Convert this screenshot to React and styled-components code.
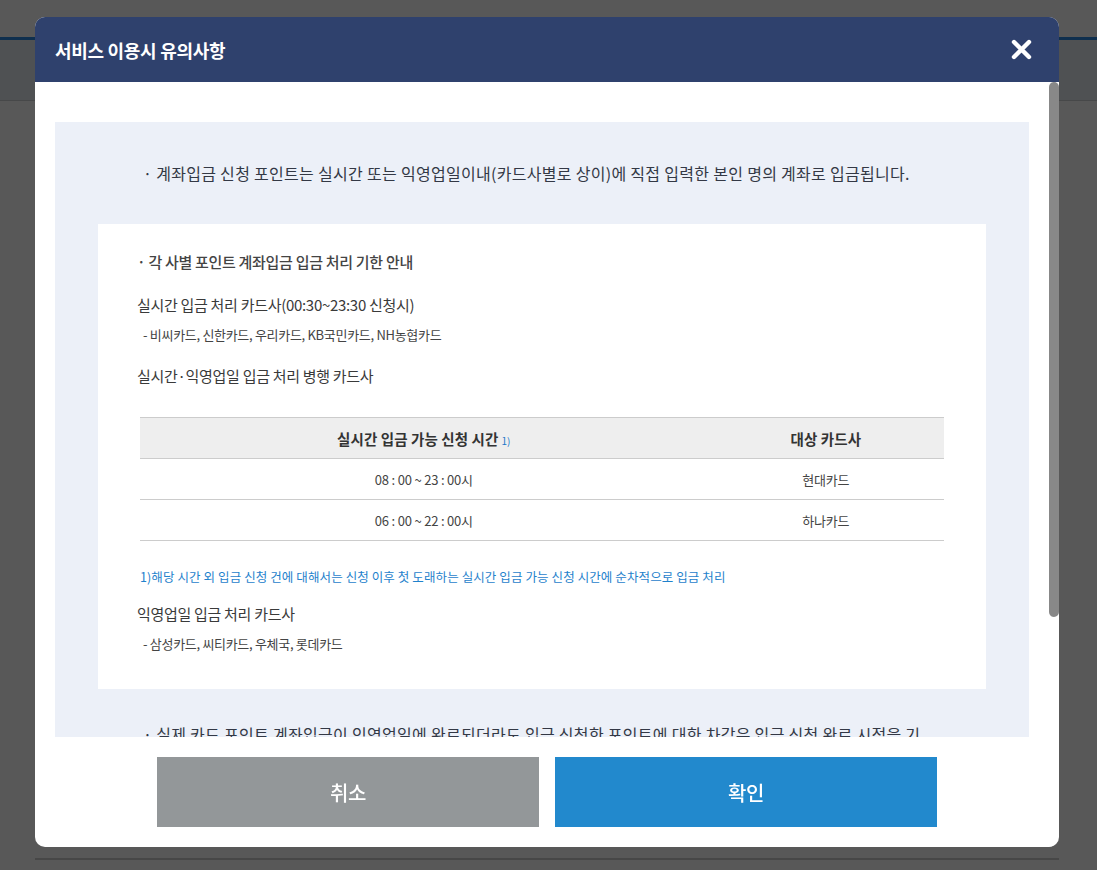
import React from "react";
import styled, { createGlobalStyle } from "styled-components";

const GlobalStyle = createGlobalStyle`
  html, body {
    margin: 0;
    padding: 0;
    background: #585858;
    font-family: "Noto Sans CJK KR", "Noto Sans", sans-serif;
  }
`;

// the page behind the dimmed overlay
export const Page = styled.div`
  height: 870px;
  display: flex;
  flex-direction: column;
  background: #585858;
`;

export const PageTop = styled.div`
  height: 37px;
`;

export const PageNav = styled.div`
  height: 60px;
  background: #4f5153;
  border-top: 3px solid #0f2f4e;
  border-bottom: 1px solid #474849;
`;

export const PageRule = styled.div`
  margin: 757px 38px 0 35px;
  border-top: 2px solid #474747;
`;

export const Modal = styled.div`
  position: fixed;
  left: 35px;
  top: 17px;
  width: 1024px;
  height: 830px;
  display: flex;
  flex-direction: column;
  background: #fff;
  border-radius: 10px;
  overflow: hidden;
`;

export const ModalHeader = styled.div`
  height: 65px;
  flex-shrink: 0;
  display: flex;
  align-items: center;
  justify-content: space-between;
  padding: 0 26px 0 20px;
  background: #2f416d;
`;

export const Title = styled.h2`
  margin: 0;
  font-size: 18px;
  font-weight: 700;
  letter-spacing: -0.3px;
  color: #fff;
`;

export const CloseButton = styled.button`
  width: 24px;
  height: 24px;
  padding: 0;
  border: 0;
  background: none;
  display: flex;
  align-items: center;
  justify-content: center;
  cursor: pointer;
`;

export const ModalBody = styled.div`
  flex: 1;
  min-height: 0;
  display: flex;
`;

export const BodyScroll = styled.div`
  flex: 1;
  overflow-y: auto;
  scrollbar-width: none;
  padding: 40px 20px 55px;

  &::-webkit-scrollbar {
    display: none;
  }
`;

export const ScrollTrack = styled.div`
  width: 10px;
  flex-shrink: 0;
  background: #fff;
`;

export const ScrollThumb = styled.div`
  height: 535px;
  background: #888;
  border-radius: 5px;
`;

export const NoticeBox = styled.div`
  background: #ecf0f8;
  padding: 39px 43px 60px;
`;

export const Notice = styled.p`
  margin: 0;
  padding: 0 58px 0 45px;
  font-size: 16px;
  line-height: 24px;
  letter-spacing: 0.3px;
  color: #333845;
`;

export const Guide = styled.div`
  background: #fff;
  margin: 39px 0 33px;
  padding: 28px 42px 36px 39px;
  display: flex;
  flex-direction: column;
`;

export const GuideTitle = styled.div`
  font-size: 15px;
  line-height: 20px;
  font-weight: 500;
  letter-spacing: -0.3px;
  color: #444;
  margin-bottom: 22px;
`;

export const Label = styled.div`
  font-size: 15px;
  line-height: 22px;
  letter-spacing: -0.3px;
  color: #3a3a3a;
  margin-bottom: ${(p) => p.$gap || 0}px;
`;

export const SubList = styled.div`
  font-size: 13px;
  line-height: 18px;
  letter-spacing: -0.3px;
  color: #444;
  padding-left: 6px;
  margin: 10px 0 ${(p) => p.$gap || 0}px;
`;

export const Table = styled.table`
  width: calc(100% - 3px);
  margin-left: 3px;
  border-collapse: collapse;
  border-top: 1px solid #cccccc;
  margin-bottom: 27px;
`;

export const Th = styled.th`
  height: 40px;
  padding: 0;
  background: #eeeeee;
  border-bottom: 1px solid #cccccc;
  font-size: 14.5px;
  font-weight: 700;
  letter-spacing: 0.1px;
  color: #333;
  text-align: center;
`;

export const Td = styled.td`
  height: 40px;
  padding: 0;
  border-bottom: 1px solid #cccccc;
  font-size: 13px;
  letter-spacing: -0.2px;
  color: #444;
  text-align: center;
`;

export const Ref = styled.span`
  font-size: 10px;
  font-weight: 400;
  color: #1f78c8;
  margin-left: 3px;
`;

export const Footnote = styled.div`
  margin-left: 3px;
  font-size: 12.5px;
  line-height: 18px;
  letter-spacing: 0.1px;
  color: #1f82cc;
  margin-bottom: 17px;
`;

export const Footer = styled.div`
  height: 110px;
  flex-shrink: 0;
  box-sizing: border-box;
  padding: 20px 0;
  display: flex;
  justify-content: center;
  gap: 16px;
`;

export const Button = styled.button`
  width: 382px;
  height: 70px;
  border: 0;
  background: ${(p) => (p.$primary ? "#2289cd" : "#939799")};
  color: #fff;
  font-family: inherit;
  font-size: 20px;
  font-weight: 500;
  letter-spacing: -0.5px;
  cursor: pointer;
`;

const rows = [
  ["08 : 00 ~ 23 : 00시", "현대카드"],
  ["06 : 00 ~ 22 : 00시", "하나카드"],
];

export default function App() {
  return (
    <>
      <GlobalStyle />
      <Page>
        <PageTop />
        <PageNav />
        <PageRule />
      </Page>
      <Modal>
        <ModalHeader>
          <Title>서비스 이용시 유의사항</Title>
          <CloseButton aria-label="닫기">
            <svg width="21" height="21" viewBox="0 0 21 21">
              <path d="M3 3 L18 18 M18 3 L3 18" stroke="#fff" strokeWidth="4.4" strokeLinecap="round" />
            </svg>
          </CloseButton>
        </ModalHeader>
        <ModalBody>
          <BodyScroll>
            <NoticeBox>
              <Notice>
                · 계좌입금 신청 포인트는 실시간 또는 익영업일이내(카드사별로 상이)에 직접 입력한 본인 명의 계좌로 입금됩니다.
              </Notice>
              <Guide>
                <GuideTitle>· 각 사별 포인트 계좌입금 입금 처리 기한 안내</GuideTitle>
                <Label>실시간 입금 처리 카드사(00:30~23:30 신청시)</Label>
                <SubList $gap={21}>- 비씨카드, 신한카드, 우리카드, KB국민카드, NH농협카드</SubList>
                <Label $gap={30}>실시간·익영업일 입금 처리 병행 카드사</Label>
                <Table>
                  <colgroup>
                    <col style={{ width: "70.6%" }} />
                    <col />
                  </colgroup>
                  <thead>
                    <tr>
                      <Th>
                        실시간 입금 가능 신청 시간<Ref>1)</Ref>
                      </Th>
                      <Th>대상 카드사</Th>
                    </tr>
                  </thead>
                  <tbody>
                    {rows.map(([time, card]) => (
                      <tr key={card}>
                        <Td>{time}</Td>
                        <Td>{card}</Td>
                      </tr>
                    ))}
                  </tbody>
                </Table>
                <Footnote>
                  1)해당 시간 외 입금 신청 건에 대해서는 신청 이후 첫 도래하는 실시간 입금 가능 신청 시간에 순차적으로 입금 처리
                </Footnote>
                <Label>익영업일 입금 처리 카드사</Label>
                <SubList>- 삼성카드, 씨티카드, 우체국, 롯데카드</SubList>
              </Guide>
              <Notice>
                · 실제 카드 포인트 계좌입금이 익영업일에 완료되더라도 입금 신청한 포인트에 대한 차감은 입금 신청 완료 시점을 기준으로 합니다.
              </Notice>
            </NoticeBox>
          </BodyScroll>
          <ScrollTrack>
            <ScrollThumb />
          </ScrollTrack>
        </ModalBody>
        <Footer>
          <Button>취소</Button>
          <Button $primary>확인</Button>
        </Footer>
      </Modal>
    </>
  );
}
